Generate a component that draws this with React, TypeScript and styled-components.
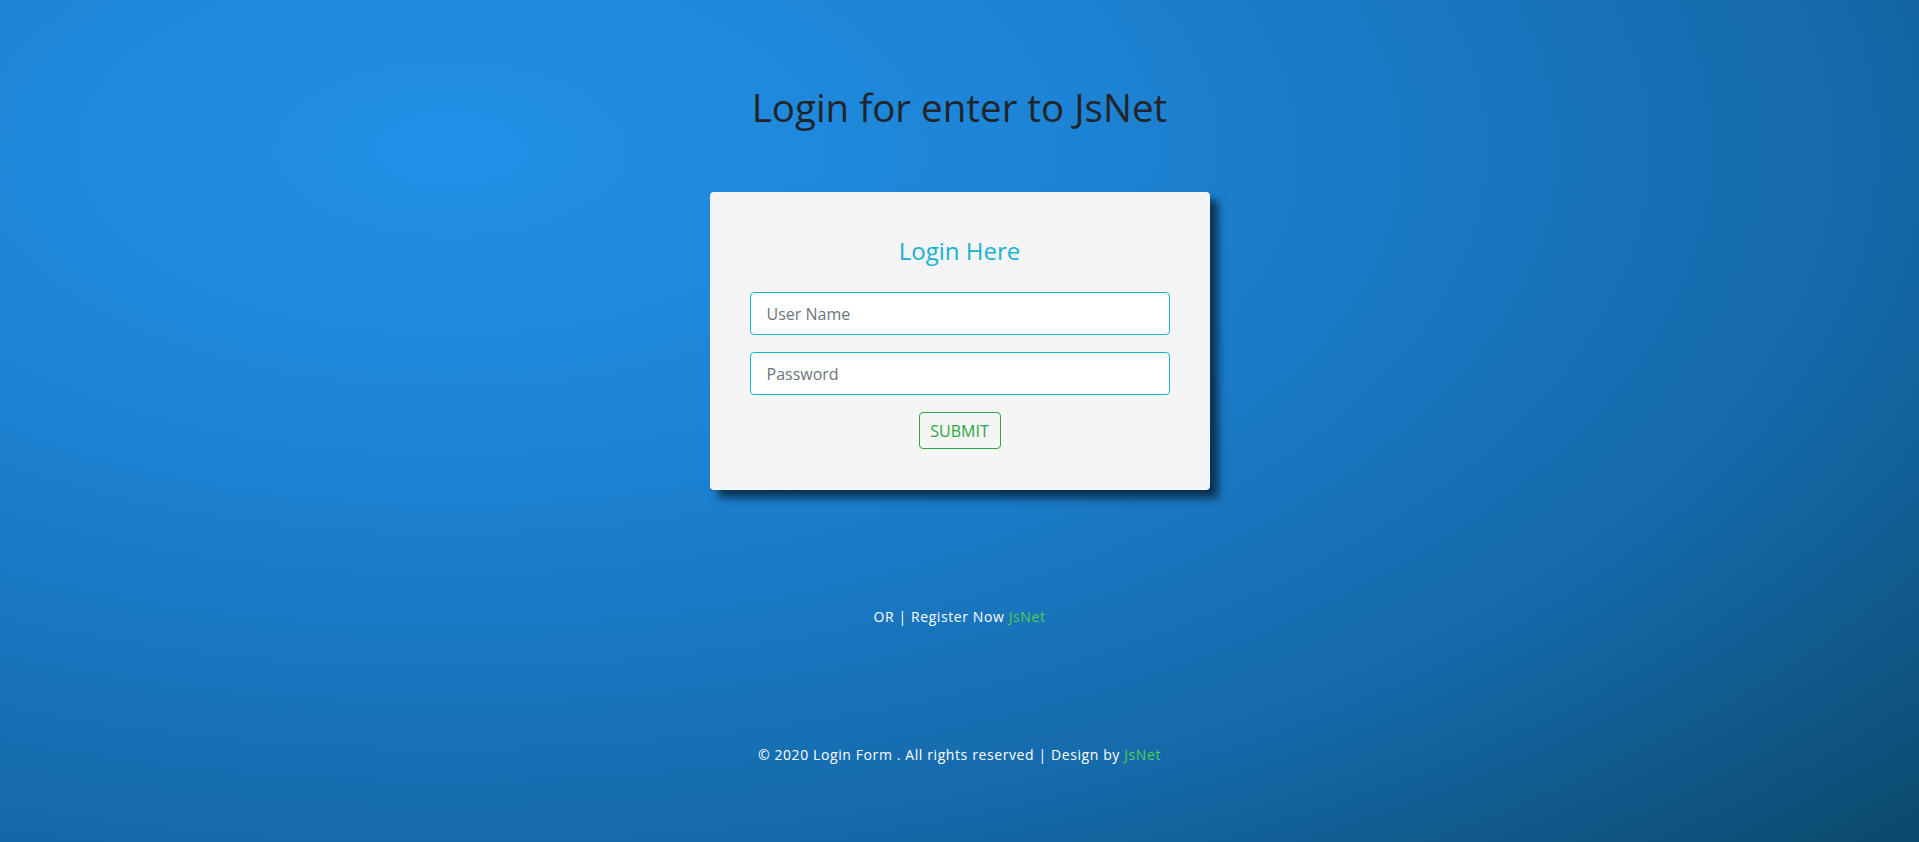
import React from "react";
import styled, { createGlobalStyle } from "styled-components";

const GlobalStyle = createGlobalStyle`
  html, body { margin: 0; padding: 0; }
  body {
    font-family: "Open Sans", "Noto Sans", sans-serif;
    min-height: 100vh;
  }
  * { box-sizing: border-box; }
`;

const Page = styled.div`
  min-height: 842px;
  display: flex;
  flex-direction: column;
  align-items: center;
  background: radial-gradient(
    ellipse 2000px 1000px at 450px 150px,
    #2190e6 0%,
    #1d84d6 30%,
    #156aab 70%,
    #0c4a6e 100%
  );
`;

const Title = styled.h1`
  margin: 83px 0 0;
  font-size: 38.5px;
  line-height: 48px;
  font-weight: 400;
  color: #212529;
`;

const Card = styled.form`
  margin-top: 61px;
  width: 500px;
  padding: 44px 40px 41px;
  background: #f5f5f5;
  border-radius: 4px;
  box-shadow: 8px 8px 8px rgba(5, 25, 45, 0.75);
  display: flex;
  flex-direction: column;
  align-items: center;
`;

const CardTitle = styled.h2`
  margin: 0 0 27px;
  font-size: 24px;
  line-height: 29px;
  font-weight: 400;
  color: #17b3cf;
`;

const Input = styled.input`
  width: 420px;
  height: 43px;
  margin-bottom: 17px;
  padding: 0 16px;
  border: 1px solid #17b3cf;
  border-radius: 4px;
  background: #fff;
  font-family: inherit;
  font-size: 16px;
  color: #495057;
  outline: none;
  &::placeholder { color: #6c757d; }
`;

const SubmitButton = styled.button`
  width: 82px;
  height: 37px;
  padding: 0;
  border: 1px solid #28a745;
  border-radius: 4px;
  background: transparent;
  color: #28a745;
  font-family: inherit;
  font-size: 16px;
  cursor: pointer;
`;

const Note = styled.p<{ $top: number }>`
  margin: ${(p) => p.$top}px 0 0;
  font-size: 14px;
  line-height: 20px;
  letter-spacing: 0.6px;
  color: #fff;
`;

const Brand = styled.a`
  color: #4fcf4f;
  text-decoration: none;
`;

export default function App() {
  return (
    <>
      <GlobalStyle />
      <Page>
        <Title>Login for enter to JsNet</Title>
        <Card onSubmit={(e) => e.preventDefault()}>
          <CardTitle>Login Here</CardTitle>
          <Input type="text" placeholder="User Name" />
          <Input type="password" placeholder="Password" />
          <SubmitButton type="submit">SUBMIT</SubmitButton>
        </Card>
        <Note $top={117}>
          OR | Register Now <Brand href="#">JsNet</Brand>
        </Note>
        <Note $top={118}>
          © 2020 Login Form . All rights reserved | Design by <Brand href="#">JsNet</Brand>
        </Note>
      </Page>
    </>
  );
}
